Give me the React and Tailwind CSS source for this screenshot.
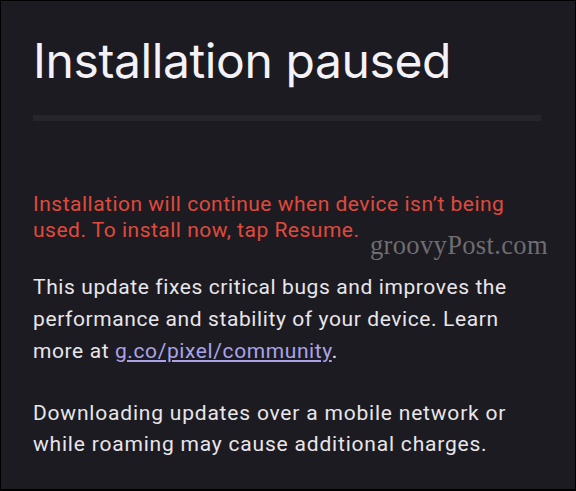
import React from "react";

const App = () => {
  return (
    <div className="relative w-[576px] h-[491px] overflow-hidden bg-[#1c1b21] border-l border-t border-r border-b-2 border-black font-['Roboto',sans-serif]">
      <div className="pl-[32px] pr-[34px] pt-[28px]">
        <h1 className="font-['Inter',sans-serif] text-[48px] leading-[64px] font-normal text-[#f4f2f6] tracking-[-0.4px]">
          Installation paused
        </h1>
        <div className="mt-[22px] h-[6px] bg-[#26252b]" />

        <p className="mt-[70px] text-[21px] leading-[26px] tracking-[0.5px] text-[#e04a3c]">
          Installation will continue when device isn’t being used. To install
          now, tap Resume.
        </p>

        <p className="mt-[28px] text-[21px] leading-[32px] tracking-[0.6px] text-[#e8e6ea]">
          This update fixes critical bugs and improves the performance and
          stability of your device. Learn more at{" "}
          <a href="#" className="text-[#aaa3e8] underline underline-offset-2">
            g.co/pixel/community
          </a>
          .
        </p>

        <p className="mt-[31px] text-[21px] leading-[31px] tracking-[0.8px] text-[#e8e6ea]">
          Downloading updates over a mobile network or while roaming may cause
          additional charges.
        </p>
      </div>

      {/* watermark */}
      <span className="absolute left-[369px] top-[231px] font-['Liberation_Serif',serif] text-[26.5px] leading-none tracking-[0.35px] text-[#6e6d72]">
        groovyPost.com
      </span>
    </div>
  );
};

export default App;
